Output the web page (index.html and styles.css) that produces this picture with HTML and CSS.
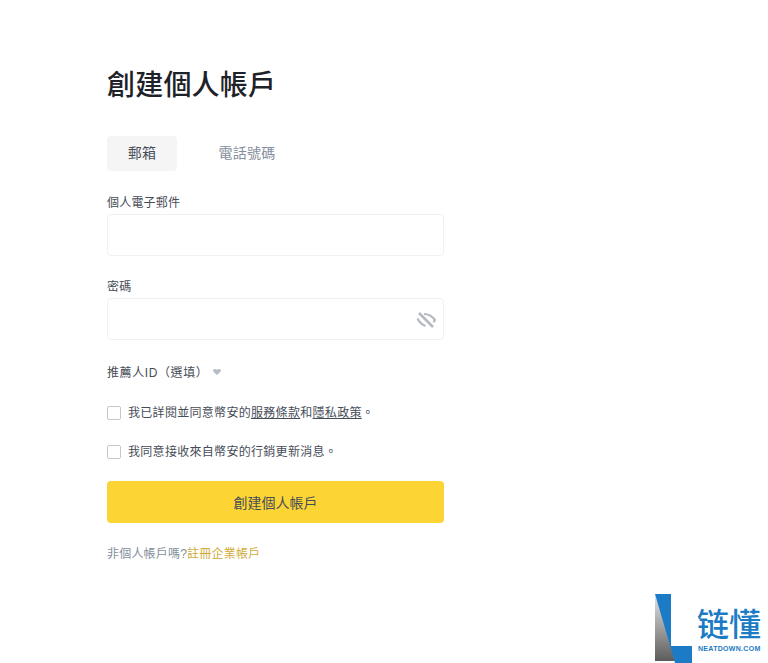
FILE: index.html
```html
<!DOCTYPE html>
<html lang="zh-Hant">
<head>
    <meta charset="UTF-8">
    <meta name="viewport" content="width=device-width, initial-scale=1.0">
    <title>創建個人帳戶</title>
    <link rel="stylesheet" href="styles.css">
</head>
<body>
    <main class="signup">
        <h1 class="signup-title">創建個人帳戶</h1>

        <div class="tabs">
            <div class="tab tab-active">郵箱</div>
            <div class="tab">電話號碼</div>
        </div>

        <form>
            <div class="form-group">
                <label for="email">個人電子郵件</label>
                <div class="field"><input type="text" id="email"></div>
            </div>
            <div class="form-group">
                <label for="password">密碼</label>
                <div class="field">
                    <input type="text" id="password">
                    <svg class="eye-icon" width="20" height="20" viewBox="0 0 20 20" fill="none" stroke="#b4bac2" stroke-width="2.2">
                        <path d="M3 3l14 14" stroke-width="2.600"/>
                        <path d="M1.500 8.500C3 11.500 5.500 14.500 9.500 16"/>
                        <path d="M8 4c4 0 8 2 11 6-.5 1-1 1.500-1.800 2.200"/>
                    </svg>
                </div>
            </div>

            <div class="referrer">推薦人ID（選填）<svg class="caret" width="8" height="6" viewBox="0 0 8 6"><path d="M0 1.500C0 .500 1 0 2 0c.8 0 1.500.300 2 .800C4.500.300 5.200 0 6 0c1 0 2 .500 2 1.500 0 .800-2.500 3.500-4 4.500C2.500 5 0 2.300 0 1.500z" fill="#b7bdc6"/></svg></div>

            <div class="checks">
                <div class="check-row">
                    <span class="checkbox"></span>
                    <span>我已詳閱並同意幣安的<a href="#">服務條款</a>和<a href="#">隱私政策</a>。</span>
                </div>
                <div class="check-row">
                    <span class="checkbox"></span>
                    <span>我同意接收來自幣安的行銷更新消息。</span>
                </div>
            </div>

            <button type="submit" class="submit-btn">創建個人帳戶</button>
        </form>

        <p class="footer-note">非個人帳戶嗎?<a href="#">註冊企業帳戶</a></p>
    </main>

    <div class="watermark">
        <svg class="watermark-logo" width="37" height="69" viewBox="0 0 37 69">
            <defs>
                <linearGradient id="logoGrey" x1="0" y1="0" x2="0" y2="1">
                    <stop offset="0" stop-color="#e4e4e4"/>
                    <stop offset="1" stop-color="#5c5c5c"/>
                </linearGradient>
            </defs>
            <path d="M0 0v67h20z" fill="url(#logoGrey)"/>
            <path d="M0 0h16v52h21v17H20z" fill="#1b7bc4"/>
        </svg>
        <div class="watermark-text">
            <div class="watermark-name">链懂</div>
            <div class="watermark-url">NEATDOWN.COM</div>
        </div>
    </div>
</body>
</html>
```

FILE: styles.css
```css
* {
    box-sizing: border-box;
}
body {
    margin: 0;
    height: 663px;
    overflow: hidden;
    position: relative;
    background: white;
    color: #474d57;
    font-family: "Liberation Sans", "Noto Sans CJK TC", sans-serif;
    font-size: 12px;
    letter-spacing: 0.2px;
}
.signup {
    width: 337px;
    margin-left: 107px;
    padding-top: 66px;
}
.signup-title {
    margin: 0 0 31px;
    font-size: 28px;
    line-height: 39px;
    font-weight: 500;
    color: #1e2329;
}
.tabs {
    display: flex;
    gap: 35px;
    margin-bottom: 24px;
}
.tab {
    width: 70px;
    height: 35px;
    line-height: 35px;
    text-align: center;
    font-size: 14px;
    color: #848e9c;
    white-space: nowrap;
}
.tab-active {
    background: #f5f5f5;
    border-radius: 4px;
    color: #474d57;
}
.form-group {
    margin-bottom: 23px;
}
.form-group label {
    display: block;
    margin-bottom: 2px;
    line-height: 17px;
}
.field {
    position: relative;
}
.field input {
    display: block;
    width: 100%;
    height: 42px;
    padding: 0 10px;
    border: 1px solid #f0f1f2;
    border-radius: 4px;
    outline: none;
}
.eye-icon {
    position: absolute;
    right: 8px;
    top: 12px;
}
.referrer {
    display: flex;
    align-items: center;
    margin-top: 25px;
    margin-bottom: 23px;
    line-height: 17px;
    letter-spacing: 0.6px;
}
.caret {
    margin-left: 5px;
    margin-bottom: 3px;
}
.checks {
    display: flex;
    flex-direction: column;
    gap: 23px;
    margin-bottom: 21px;
    letter-spacing: 0.3px;
}
.check-row {
    display: flex;
    align-items: center;
    height: 16px;
    line-height: 16px;
    white-space: nowrap;
}
.checkbox {
    width: 14px;
    height: 14px;
    margin-right: 7px;
    border: 1px solid #c4c8ce;
    border-radius: 2px;
}
.check-row a {
    color: #474d57;
}
.submit-btn {
    display: block;
    width: 100%;
    height: 42px;
    background: #fcd535;
    border: none;
    border-radius: 4px;
    color: #474d57;
    font-family: inherit;
    font-size: 14px;
    cursor: pointer;
}
.footer-note {
    margin: 23px 0 0;
    line-height: 17px;
    color: #848e9c;
}
.footer-note a {
    color: #d0ab3a;
    text-decoration: none;
}
.watermark {
    position: absolute;
    left: 655px;
    top: 594px;
    display: flex;
    width: 113px;
}
.watermark-logo {
    flex: none;
}
.watermark-text {
    margin-left: 5px;
    padding-top: 9px;
    color: #1b7bc4;
}
.watermark-name {
    font-size: 32px;
    line-height: 38px;
    font-weight: 500;
    font-family: "Noto Sans CJK SC", sans-serif;
    letter-spacing: 0;
    white-space: nowrap;
}
.watermark-url {
    margin-top: 3px;
    margin-left: 1px;
    font-size: 7px;
    line-height: 10px;
    font-weight: 700;
    letter-spacing: 0.3px;
    white-space: nowrap;
}
```
